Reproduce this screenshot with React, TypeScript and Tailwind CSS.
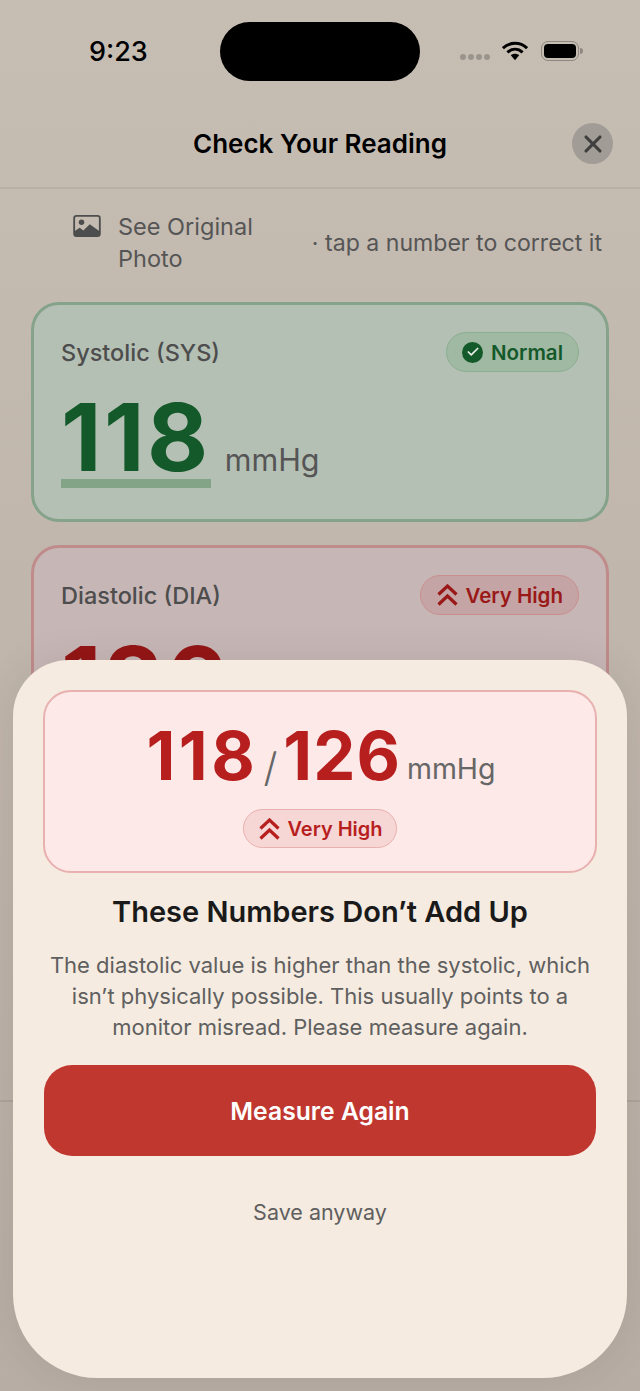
import { Check, X } from 'lucide-react';

const font = "font-['Inter','Noto_Sans',sans-serif]";

const DoubleChevron = ({ className }: { className: string }) => (
  <svg width="21" height="22" viewBox="0 0 21 22" fill="none" stroke="currentColor" strokeWidth="3.2" className={className}>
    <path d="M1.5 10.5 10.5 2l9 8.5" />
    <path d="M1.5 20.5 10.5 12l9 8.5" />
  </svg>
);

const StatusBar = () => (
  <div className="relative flex h-[104px] shrink-0 items-start justify-between">
    <span className="ml-[89px] mt-[37px] text-[27px] leading-[30px] font-medium text-black">9:23</span>
    <div className="absolute left-[220px] top-[22px] h-[59px] w-[200px] rounded-full bg-black" />
    <div className="mr-[57px] mt-[41px] flex items-center">
      <div className="mt-[12px] flex gap-[2px]">
        <i className="size-[6px] rounded-full bg-[#9a948d]" />
        <i className="size-[6px] rounded-full bg-[#9a948d]" />
        <i className="size-[6px] rounded-full bg-[#9a948d]" />
        <i className="size-[6px] rounded-full bg-[#9a948d]" />
      </div>
      <svg width="26" height="20" viewBox="0 0 28 21" className="ml-[12px]">
        <path d="M1 7.5C8.5 .5 19.5 .5 27 7.5" fill="none" stroke="#000" strokeWidth="3.2" />
        <path d="M5.8 12C10.8 7.6 17.2 7.6 22.2 12" fill="none" stroke="#000" strokeWidth="3.2" />
        <path d="M9.5 15.2C12 13 16 13 18.5 15.2L14 20.5Z" fill="#000" />
      </svg>
      <div className="ml-[13px] flex items-center">
        <div className="h-[20px] w-[38px] rounded-[7px] border-[1.5px] border-[#8d8881] p-[2px]">
          <div className="size-full rounded-[4px] bg-black" />
        </div>
        <div className="ml-[1px] h-[6px] w-[3px] rounded-r-full bg-[#8d8881]" />
      </div>
    </div>
  </div>
);

const ReadingCard = ({
  label,
  value,
  tone,
}: {
  label: string;
  value: string;
  tone: 'green' | 'red';
}) => {
  const green = tone === 'green';
  return (
    <div
      className={`h-[220px] rounded-[28px] border-[3px] px-[27px] pt-[27px] ${
        green ? 'border-[#85a38a] bg-[#b5c0b5]' : 'border-[#bf8b8b] bg-[#c6b6b5]'
      }`}
    >
      <div className="flex h-[40px] items-center justify-between">
        <span className="pt-[2px] text-[23.5px] font-medium text-[#4d4d4d]">{label}</span>
        {green ? (
          <span className="flex h-[40px] items-center gap-[8px] rounded-full border-[1.5px] border-[#8bae91] bg-[#a0b9a3] pl-[15px] pr-[15px] text-[20.5px] font-semibold text-[#14592a]">
            <span className="flex size-[21px] items-center justify-center rounded-full bg-[#14592a]">
              <Check size={14} strokeWidth={3} color="#e6ece6" />
            </span>
            <span className="pt-[2px]">Normal</span>
          </span>
        ) : (
          <span className="flex h-[40px] items-center gap-[7px] rounded-full border-[1.5px] border-[#c98f8f] bg-[#c4a4a4] pl-[16px] pr-[15px] text-[20.5px] font-semibold text-[#9a1818]">
            <DoubleChevron className="shrink-0" />
            <span className="pt-[2px]">Very High</span>
          </span>
        )}
      </div>
      <div className="mt-[23px] flex items-end">
        <span
          className={`border-b-[9px] text-[94px] leading-[84px] font-bold tracking-[2.5px] ${
            green ? 'border-[#84a488] text-[#14592a]' : 'border-[#bb8a8a] text-[#941616]'
          }`}
        >
          {value}
        </span>
        <span className="mb-[8px] ml-[14px] text-[30.5px] leading-[40px] text-[#555555]">mmHg</span>
      </div>
    </div>
  );
};

const App = () => {
  return (
    <div className={`relative flex h-[1391px] w-[640px] flex-col overflow-hidden bg-gradient-to-b from-[#c6bdb3] to-[#b8ada4] ${font}`}>
      <StatusBar />
      <div className="relative flex h-[85px] shrink-0 items-center justify-center border-b-2 border-[#b8b0a7]">
        <h1 className="mb-[4px] text-[26px] font-semibold text-black">Check Your Reading</h1>
        <button className="absolute right-[27px] top-[19px] flex size-[41px] items-center justify-center rounded-full bg-[#a19c96] text-[#3f3f3f]">
          <X size={28} strokeWidth={2.7} />
        </button>
      </div>
      <div className="flex h-[113px] shrink-0 items-center pl-[73px] pr-[38px]">
        <div className="flex w-[220px] items-start gap-[17px] pb-[5px]">
          <svg width="28" height="22" viewBox="0 0 30 24" className="mt-[4px] shrink-0">
            <rect x="1" y="1" width="28" height="22" rx="2.5" fill="none" stroke="#4d4d4d" strokeWidth="2" />
            <circle cx="9" cy="8" r="3" fill="#4d4d4d" />
            <path d="M1 22V18l6-4 4 3 7-7 11 8v4a1 1 0 0 1-1 1H2a1 1 0 0 1-1-1Z" fill="#4d4d4d" />
          </svg>
          <span className="text-[23.5px] leading-[32px] text-[#555555]">See Original Photo</span>
        </div>
        <span className="ml-auto mb-[5px] text-[23.1px] text-[#555555]">· tap a number to correct it</span>
      </div>
      <div className="flex flex-col gap-[23px] px-[31px]">
        <ReadingCard label="Systolic (SYS)" value="118" tone="green" />
        <ReadingCard label="Diastolic (DIA)" value="126" tone="red" />
      </div>
      <div className="mt-auto h-[291px] border-t-2 border-[#aca399]" />

      {/* bottom sheet */}
      <div className="absolute left-[13px] top-[660px] h-[718px] w-[614px] rounded-t-[56px] rounded-b-[84px] bg-[#f5ebe0] px-[30px] pt-[30px] shadow-[0_0_40px_rgba(0,0,0,0.08)]">
        <div className="flex h-[183px] flex-col items-center rounded-[28px] border-[2.5px] border-[#e8b0ae] bg-[#fce9e8] pt-[26px]">
          <div className="ml-[2px] flex items-end">
            <span className="text-[67px] leading-[76px] font-bold tracking-[3.5px] text-[#b71f1f]">118</span>
            <span className="mb-[4px] ml-[5px] mr-[6px] text-[40px] leading-[44px] font-light text-[#666666]">/</span>
            <span className="text-[67px] leading-[76px] font-bold tracking-[1px] text-[#b71f1f]">126</span>
            <span className="mb-[5px] ml-[6px] text-[28.5px] leading-[40px] text-[#666666]">mmHg</span>
          </div>
          <span className="mt-[15px] flex h-[39px] items-center gap-[7px] rounded-full border-[1.5px] border-[#e8b0ae] bg-[#f7d7d6] pl-[15px] pr-[13px] text-[20px] font-semibold text-[#b71f1f]">
            <DoubleChevron className="shrink-0" />
            Very High
          </span>
        </div>
        <h2 className="mt-[20px] text-center text-[29px] leading-[38px] font-semibold text-[#1a1a1a]">These Numbers Don’t Add Up</h2>
        <p className="mt-[19px] text-center text-[22px] leading-[31px] text-[#5f5f5f]">
          The diastolic value is higher than the systolic, which isn’t physically possible. This usually points to a monitor misread. Please measure again.
        </p>
        <button className="mx-px mt-[22px] h-[91px] w-[552px] rounded-[28px] bg-[#c0372f] pt-[2px] text-[24.7px] font-semibold text-white">Measure Again</button>
        <p className="mt-[41px] text-center text-[21.5px] leading-[30px] text-[#5f5f5f]">Save anyway</p>
      </div>
    </div>
  );
};

export default App;
